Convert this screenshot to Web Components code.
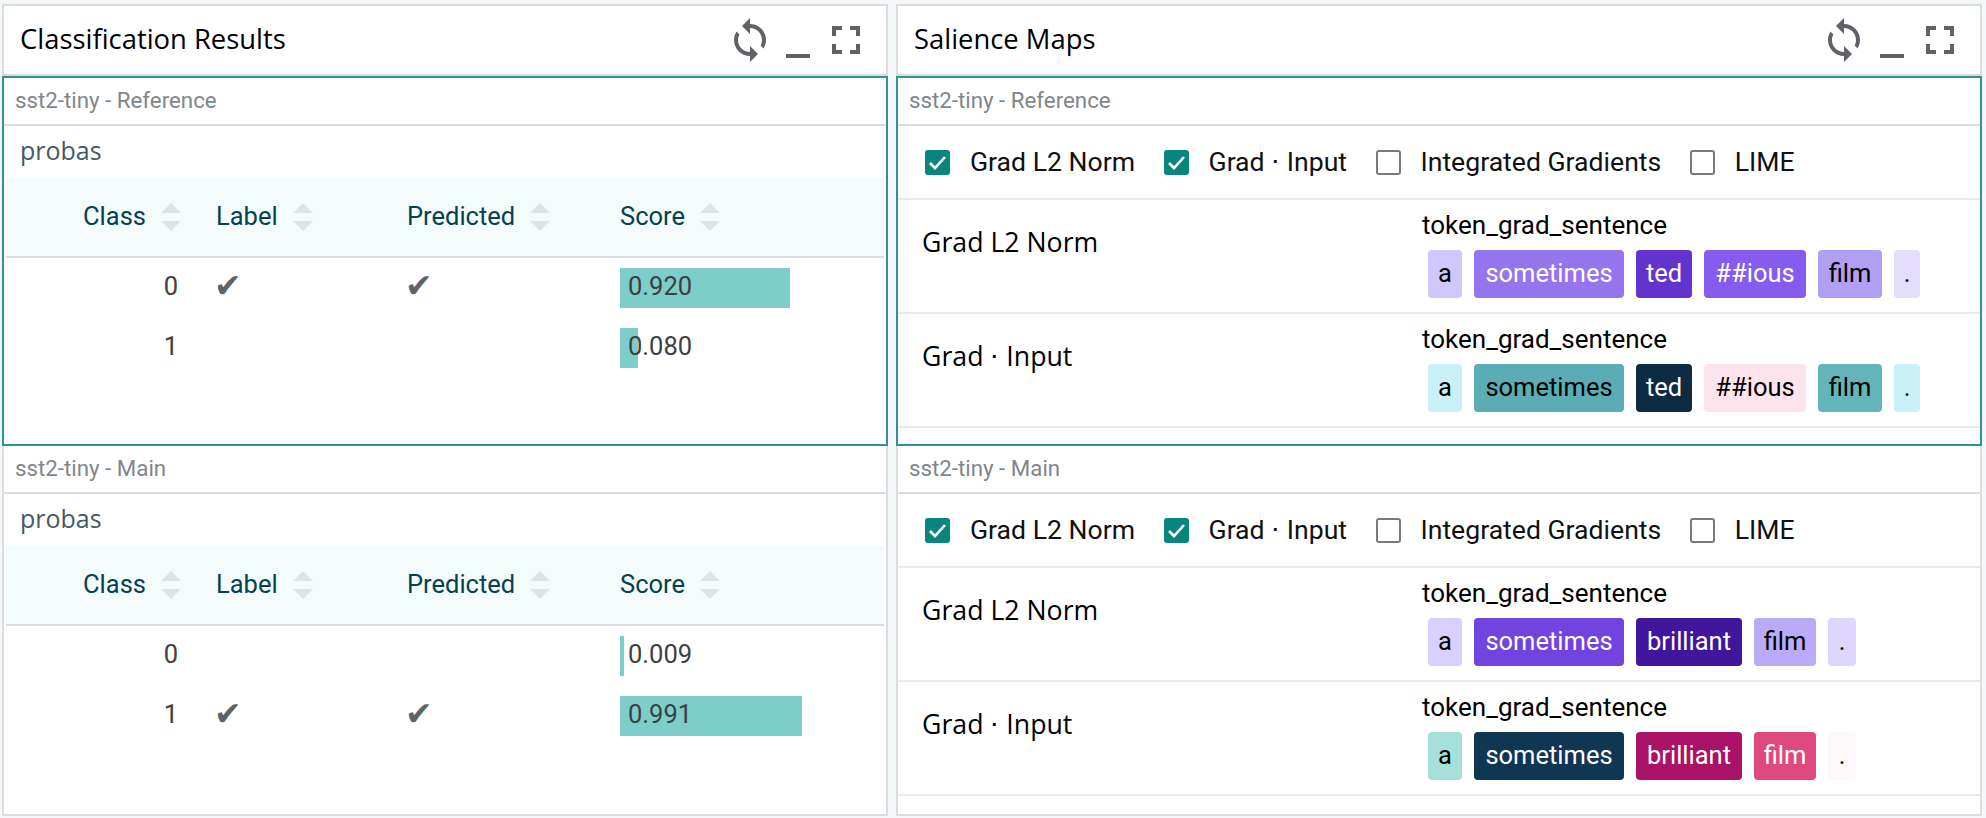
<!DOCTYPE html>
<html lang="en">
<head>
<meta charset="UTF-8">
<title>Classification Results and Salience Maps</title>
<style>
  html, body { margin: 0; height: 100%; background: #f4f8f9; }
  body { font-family: Roboto, "Liberation Sans", sans-serif; color: #000; }
  lit-workspace > * { min-width: 0; }
</style>
</head>
<body>

<lit-workspace>
  <lit-panel heading="Classification Results">
    <model-section label="sst2-tiny - Reference" selected>
      <score-table field="probas" rows='[["0",true,true,"0.920",170],["1",false,false,"0.080",18]]'></score-table>
    </model-section>
    <model-section label="sst2-tiny - Main">
      <score-table field="probas" rows='[["0",false,false,"0.009",4],["1",true,true,"0.991",182]]'></score-table>
    </model-section>
  </lit-panel>

  <lit-panel heading="Salience Maps">
    <model-section label="sst2-tiny - Reference" selected>
      <method-bar></method-bar>
      <salience-row method="Grad L2 Norm">
        <token-chip bg="#cfc6fc" style="--w:34px">a</token-chip>
        <token-chip bg="#9575ed" light style="--w:150px">sometimes</token-chip>
        <token-chip bg="#6234cd" light style="--w:56px">ted</token-chip>
        <token-chip bg="#855ced" light style="--w:102px">##ious</token-chip>
        <token-chip bg="#b09ff3" style="--w:64px">film</token-chip>
        <token-chip bg="#e4defc" style="--w:26px">.</token-chip>
      </salience-row>
      <salience-row method="Grad ⋅ Input">
        <token-chip bg="#c9f0f7" style="--w:34px">a</token-chip>
        <token-chip bg="#5aacb5" style="--w:150px">sometimes</token-chip>
        <token-chip bg="#0c2a42" light style="--w:56px">ted</token-chip>
        <token-chip bg="#fde4ec" style="--w:102px">##ious</token-chip>
        <token-chip bg="#63b5ba" style="--w:64px">film</token-chip>
        <token-chip bg="#c9f0f7" style="--w:26px">.</token-chip>
      </salience-row>
    </model-section>
    <model-section label="sst2-tiny - Main">
      <method-bar></method-bar>
      <salience-row method="Grad L2 Norm">
        <token-chip bg="#d9d0ff" style="--w:34px">a</token-chip>
        <token-chip bg="#7144e0" light style="--w:150px">sometimes</token-chip>
        <token-chip bg="#40169c" light style="--w:106px">brilliant</token-chip>
        <token-chip bg="#baaaf7" style="--w:62px">film</token-chip>
        <token-chip bg="#ded6ff" style="--w:28px">.</token-chip>
      </salience-row>
      <salience-row method="Grad ⋅ Input">
        <token-chip bg="#a5e0da" style="--w:34px">a</token-chip>
        <token-chip bg="#0f3653" light style="--w:150px">sometimes</token-chip>
        <token-chip bg="#a91266" light style="--w:106px">brilliant</token-chip>
        <token-chip bg="#de4a80" light style="--w:62px">film</token-chip>
        <token-chip bg="#fdf8f9" style="--w:28px">.</token-chip>
      </salience-row>
    </model-section>
  </lit-panel>
</lit-workspace>

<script>
const HEADING_FONT = '"Open Sans", Roboto, sans-serif';

class LitWorkspace extends HTMLElement {
  constructor() {
    super();
    this.attachShadow({ mode: 'open' }).innerHTML = `
      <style>
        :host {
          display: grid;
          grid-template-columns: 886px 1086px;
          column-gap: 8px;
          padding: 4px 0 2px 2px;
          height: 818px;
          box-sizing: border-box;
        }
      </style>
      <slot></slot>`;
  }
}

class LitPanel extends HTMLElement {
  constructor() {
    super();
    const heading = this.getAttribute('heading');
    this.attachShadow({ mode: 'open' }).innerHTML = `
      <style>
        :host { display: flex; flex-direction: column; background: #fff; }
        header {
          height: 68px;
          display: flex;
          align-items: center;
          justify-content: space-between;
          border: 2px solid #dadce0;
          padding: 0 16px;
        }
        h1 {
          margin: 0 0 4px;
          font: 400 27.4px ${HEADING_FONT};
          color: #000;
        }
        .icons { display: flex; }
        svg { width: 48px; height: 48px; fill: #5f6368; display: block; }
        .body { flex: 1; display: flex; flex-direction: column; }
        ::slotted(model-section:last-child) { flex: 1; }
      </style>
      <header>
        <h1>${heading}</h1>
        <div class="icons">
          <svg viewBox="0 0 24 24"><path d="M12 4V1L8 5l4 4V6c3.31 0 6 2.69 6 6 0 1.01-.25 1.97-.7 2.8l1.46 1.46C19.54 15.03 20 13.57 20 12c0-4.42-3.58-8-8-8zm0 14c-3.31 0-6-2.69-6-6 0-1.01.25-1.97.7-2.8L5.24 7.74C4.46 8.97 4 10.43 4 12c0 4.42 3.58 8 8 8v3l4-4-4-4v3z"/></svg>
          <svg viewBox="0 0 24 24"><path d="M6 19h12v2H6z"/></svg>
          <svg viewBox="0 0 24 24"><path d="M7 14H5v5h5v-2H7v-3zm-2-4h2V7h3V5H5v5zm12 7h-3v2h5v-5h-2v3zM14 5v2h3v3h2V5h-5z"/></svg>
        </div>
      </header>
      <div class="body"><slot></slot></div>`;
  }
}

class ModelSection extends HTMLElement {
  constructor() {
    super();
    this.attachShadow({ mode: 'open' }).innerHTML = `
      <style>
        :host {
          display: block;
          box-sizing: border-box;
          border: 2px solid #dadce0;
          border-top: 0;
        }
        :host([selected]) {
          border: 2px solid #31909b;
          height: 370px;
        }
        .label {
          height: 46px;
          padding-left: 11px;
          line-height: 44px;
          font-size: 22.3px;
          color: #80868b;
          border-bottom: 2px solid #dadce0;
        }
      </style>
      <div class="label">${this.getAttribute('label')}</div>
      <slot></slot>`;
  }
}

class ScoreTable extends HTMLElement {
  constructor() {
    super();
    const rows = JSON.parse(this.getAttribute('rows'));
    const arrows = `<svg class="sort" viewBox="0 0 20 28"><path d="M10 0l10 10H0zM10 28L0 18h20z"/></svg>`;
    const cols = ['Class', 'Label', 'Predicted', 'Score'];
    this.attachShadow({ mode: 'open' }).innerHTML = `
      <style>
        :host { display: block; padding: 0 2px; }
        .field {
          height: 52px;
          padding-left: 14px;
          font: 400 25px/48px ${HEADING_FONT};
          color: #455a64;
        }
        .row {
          display: grid;
          grid-template-columns: 210px 191px 213px 1fr;
          align-items: center;
        }
        .head {
          height: 78px;
          background: #f4fcfb;
          border-bottom: 2px solid #dadce0;
          color: #07414f;
          font-size: 25.5px;
        }
        .head > div { display: flex; align-items: center; gap: 15px; }
        .head > div:first-child { justify-content: flex-end; padding-right: 35px; }
        .head span { margin-bottom: 3px; }
        .sort { width: 20px; height: 28px; fill: #dfe3e4; }
        .cells .row { height: 60px; color: #3c4043; font-size: 25.5px; }
        .num { text-align: right; padding: 0 38px 5px 0; }
        .check { font: 33px "DejaVu Sans", sans-serif; color: #5f6368; margin: 0 0 5px -2px; }
        .bar { height: 40px; position: relative; line-height: 36px; padding-left: 8px; }
        .bar i { position: absolute; left: 0; top: 0; height: 40px; background: #7dcdcb; }
        .bar span { position: relative; }
      </style>
      <div class="field">${this.getAttribute('field')}</div>
      <div class="row head">${cols.map(c => `<div><span>${c}</span>${arrows}</div>`).join('')}</div>
      <div class="cells">
        ${rows.map(([cls, label, pred, score, w]) => `
          <div class="row">
            <div class="num">${cls}</div>
            <div class="check">${label ? '✔' : ''}</div>
            <div class="check">${pred ? '✔' : ''}</div>
            <div class="bar"><i style="width:${w}px"></i><span>${score}</span></div>
          </div>`).join('')}
      </div>`;
  }
}

class MethodBar extends HTMLElement {
  constructor() {
    super();
    const methods = [['Grad L2 Norm', true], ['Grad ⋅ Input', true], ['Integrated Gradients', false], ['LIME', false]];
    this.attachShadow({ mode: 'open' }).innerHTML = `
      <style>
        :host {
          display: flex;
          align-items: center;
          gap: 28.5px;
          height: 72px;
          padding-left: 27px;
          border-bottom: 2px solid #e8ebee;
          font-size: 26.6px;
          color: #111;
        }
        label { display: flex; align-items: center; gap: 20px; }
        label span:last-child { margin-bottom: 2px; }
        .box {
          width: 25px; height: 25px;
          box-sizing: border-box;
          border-radius: 3px;
          border: 2px solid #7a7a7a;
          display: block;
        }
        .box.on { border: 0; background: #07857f; }
      </style>
      ${methods.map(([m, on]) => `
        <label>
          ${on
            ? `<svg class="box on" viewBox="0 0 25 25"><path d="M5 13l5 5 10-11" fill="none" stroke="#fff" stroke-width="2.6"/></svg>`
            : `<span class="box"></span>`}
          <span>${m}</span>
        </label>`).join('')}`;
  }
}

class SalienceRow extends HTMLElement {
  constructor() {
    super();
    this.attachShadow({ mode: 'open' }).innerHTML = `
      <style>
        :host {
          display: grid;
          grid-template-columns: 500px 1fr;
          height: 112px;
          padding-left: 24px;
          border-bottom: 2px solid #e8ebee;
        }
        .method {
          padding-top: 23px;
          font: 400 26.7px/38px ${HEADING_FONT};
          color: #000;
        }
        .field { font-size: 26px; line-height: 28px; padding-top: 11px; color: #000; }
        .tokens { display: flex; gap: 12px; margin: 11px 0 0 6px; }
      </style>
      <div class="method">${this.getAttribute('method')}</div>
      <div>
        <div class="field">token_grad_sentence</div>
        <div class="tokens"><slot></slot></div>
      </div>`;
  }
}

class TokenChip extends HTMLElement {
  constructor() {
    super();
    const bg = this.getAttribute('bg');
    const fg = this.hasAttribute('light') ? '#fff' : '#000';
    this.attachShadow({ mode: 'open' }).innerHTML = `
      <style>
        :host {
          display: block;
          width: var(--w);
          height: 48px;
          line-height: 46px;
          text-align: center;
          border-radius: 4px;
          font-size: 25.5px;
          background: ${bg};
          color: ${fg};
        }
      </style>
      <slot></slot>`;
  }
}

customElements.define('lit-workspace', LitWorkspace);
customElements.define('lit-panel', LitPanel);
customElements.define('model-section', ModelSection);
customElements.define('score-table', ScoreTable);
customElements.define('method-bar', MethodBar);
customElements.define('salience-row', SalienceRow);
customElements.define('token-chip', TokenChip);
</script>

</body>
</html>
